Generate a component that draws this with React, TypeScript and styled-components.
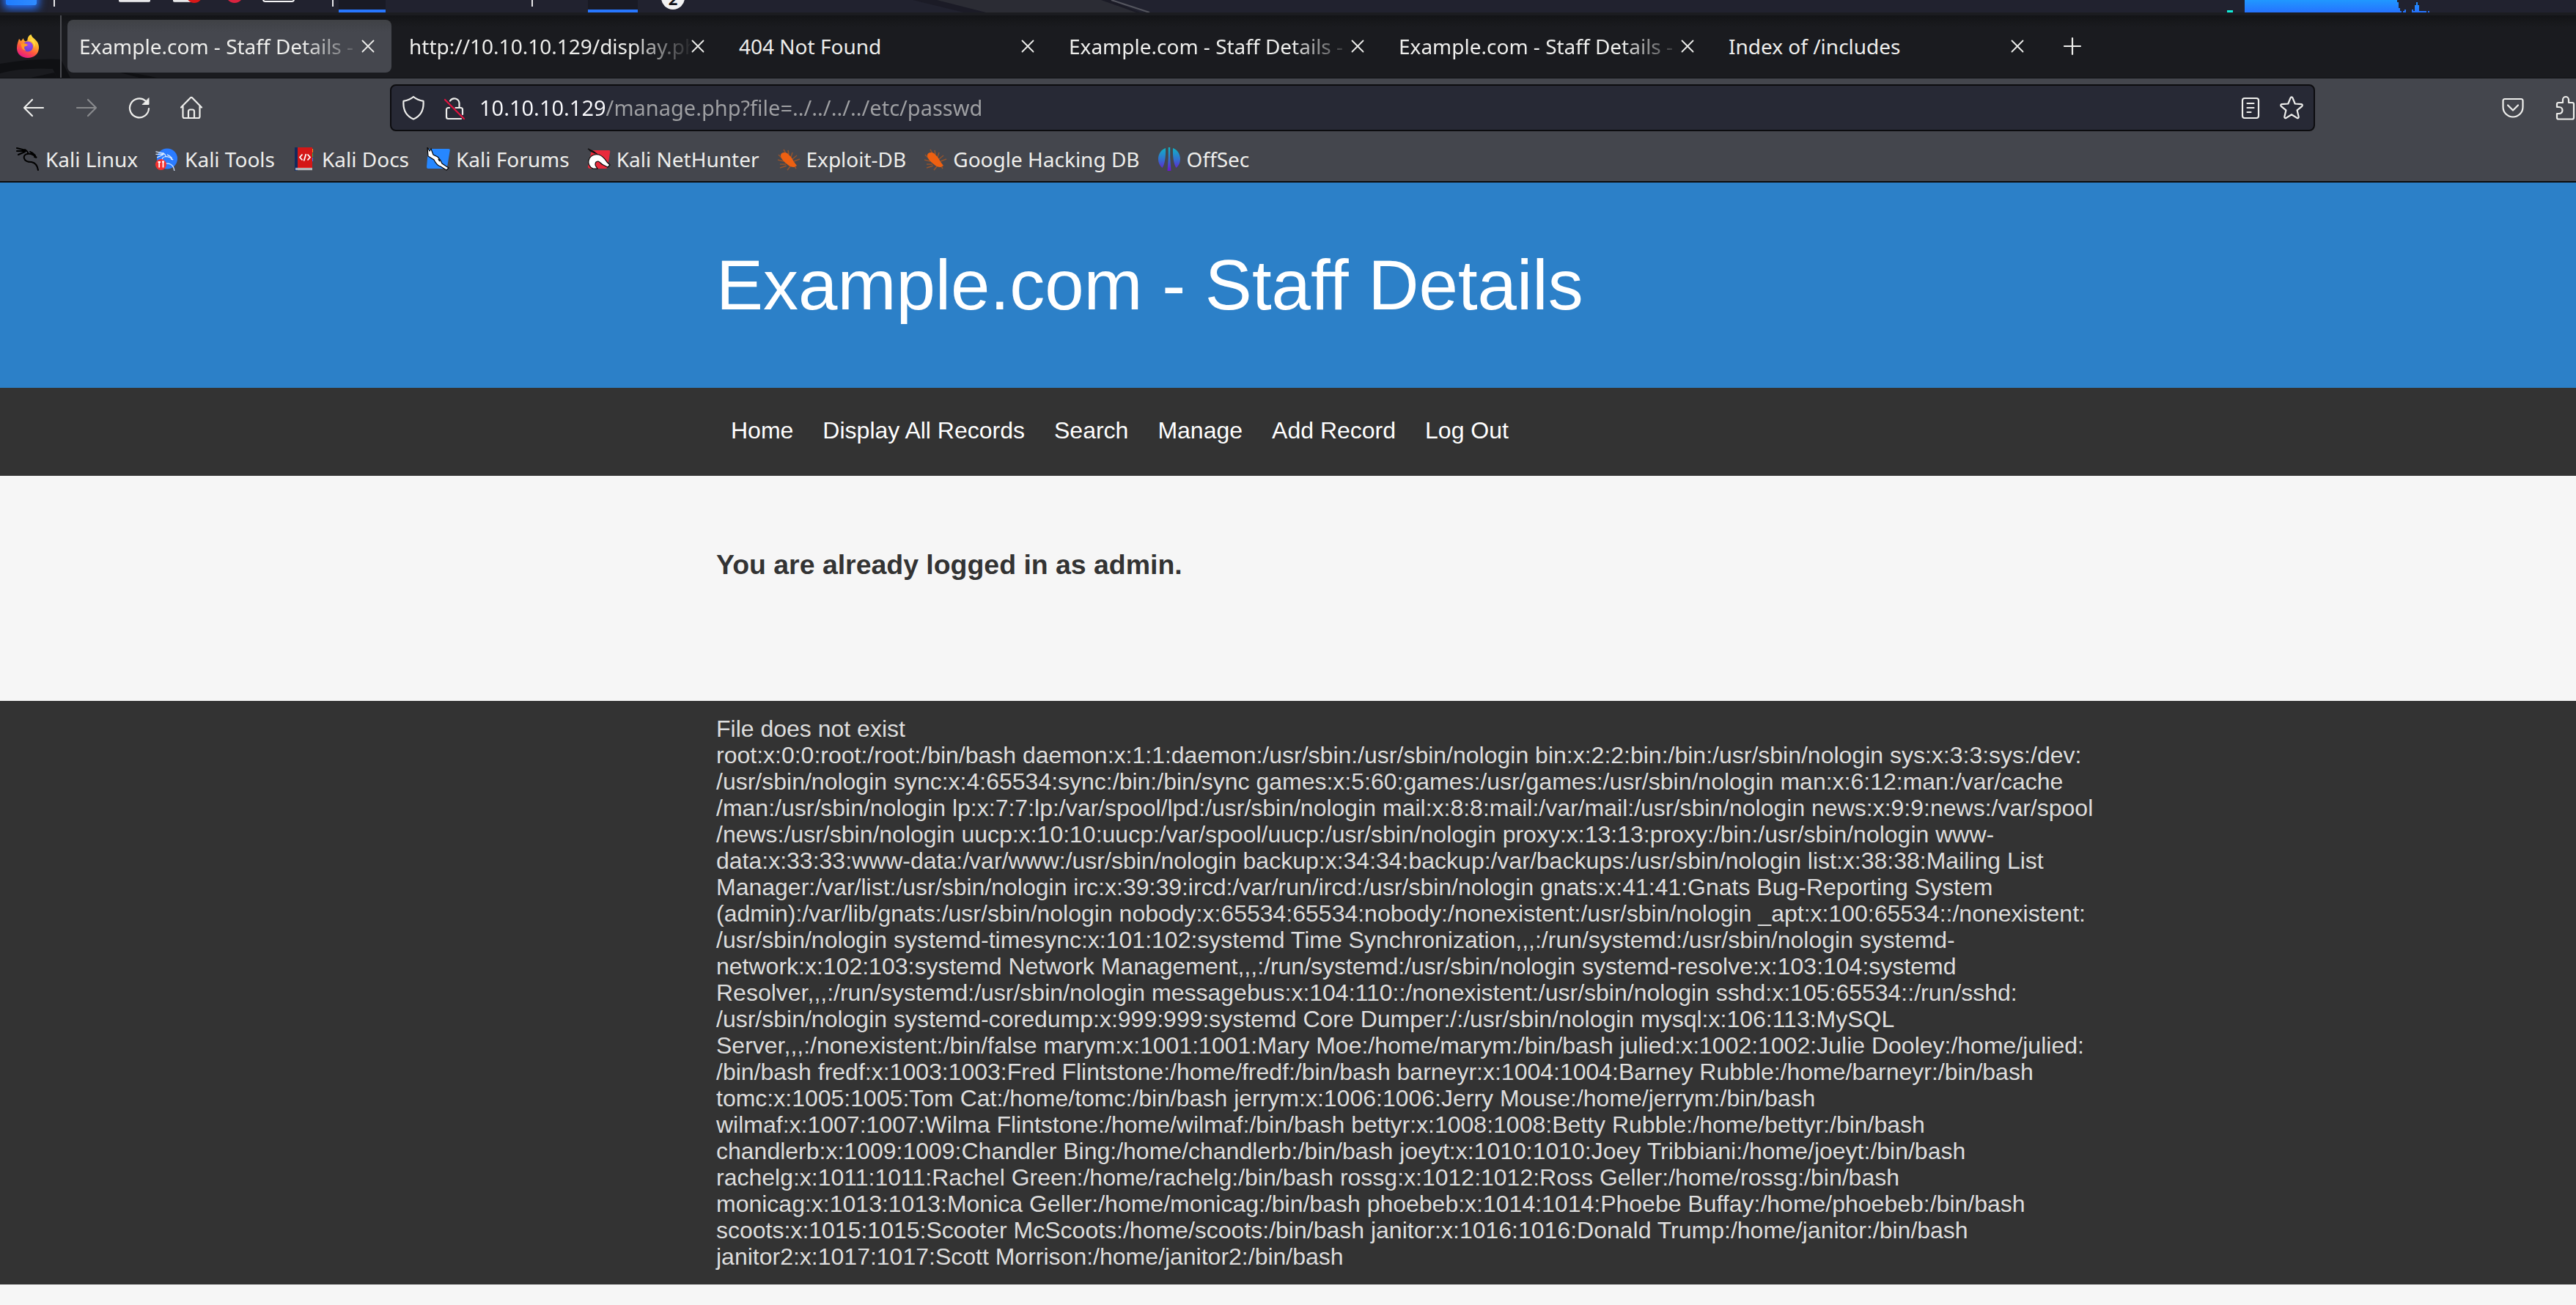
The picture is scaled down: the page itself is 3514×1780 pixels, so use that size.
import React from 'react';
import styled, { createGlobalStyle } from 'styled-components';

const uiFont = '"Noto Sans", "Open Sans", sans-serif';
const pageFont = '"Liberation Sans", Arial, sans-serif';

const GlobalStyle = createGlobalStyle`
  *, *::before, *::after { box-sizing: border-box; }
  html, body { margin: 0; background: #f6f6f6; }
  body { overflow-x: hidden; font-family: ${pageFont}; }
  button { padding: 0; border: 0; background: none; color: inherit; font: inherit; cursor: pointer; }
  svg { display: block; flex: none; }
`;

/* ---------- desktop panel ---------- */

const Panel = styled.div`
  position: relative;
  display: flex;
  align-items: flex-end;
  height: 21px;
  padding-right: 194px;
  overflow: hidden;
  background: #21222f;
  border-bottom: 4px solid #1b1c20;
`;

const PanelBackdrop = styled.svg`
  position: absolute;
  left: 1240px;
  top: 0;
`;

const StartLogo = styled.div`
  flex: none;
  width: 42px;
  height: 42px;
  margin: 0 0 10px 8px;
  border-radius: 2px;
  background: linear-gradient(90deg, #1f7dff, #2f8bff);
  box-shadow: 0 2px 12px 3px #2673ff;
`;

const Divider = styled.div<{ $gap: number }>`
  flex: none;
  width: 2px;
  height: 30px;
  margin: 0 0 8px ${(p) => p.$gap}px;
  background: #e8e8ea;
`;

const Launcher = styled.div<{ $gap: number; $width: number; $rise: number }>`
  position: relative;
  flex: none;
  width: ${(p) => p.$width}px;
  height: 34px;
  margin: 0 0 ${(p) => p.$rise}px ${(p) => p.$gap}px;
`;

const Sheet = styled(Launcher)`
  border-radius: 2px;
  background: #f1f1f2;
  border-bottom: 2px solid #d5d5d8;
`;

const Dot = styled.div`
  position: absolute;
  right: -14px;
  bottom: -3px;
  width: 22px;
  height: 22px;
  border-radius: 50%;
  background: #d81818;
`;

const Orb = styled(Launcher)`
  border-radius: 50%;
  background: #d9233f;
`;

const Terminal = styled(Launcher)`
  border: 2px solid #f4f4f6;
  border-radius: 4px;
  background: #23242f;
`;

const TaskButton = styled.button<{ $gap: number; $width: number }>`
  flex: none;
  width: ${(p) => p.$width}px;
  height: 50px;
  margin-left: ${(p) => p.$gap}px;
  background: #191a24;
  border-bottom: 4px solid #2777ff;
`;

const CountBadge = styled.span`
  flex: none;
  width: 32px;
  height: 32px;
  margin: 0 0 4px 32px;
  border-radius: 50%;
  background: #f2f2f2;
  color: #15151a;
  font: 700 22px/34px ${uiFont};
  text-align: center;
`;

const Graph = styled.svg`
  margin-left: auto;
`;

/* ---------- tab strip ---------- */

const TabStrip = styled.div`
  position: relative;
  display: flex;
  align-items: flex-start;
  height: 86px;
  background: linear-gradient(#131417, #1a1b1f 16px);
  border-bottom: 1px solid #101114;
  color: #eeeeec;
  font-family: ${uiFont};
`;

const StripArt = styled.svg`
  position: absolute;
  left: 0;
  bottom: 0;
`;

const PinnedArea = styled.div`
  position: relative;
  display: flex;
  align-items: center;
  flex: none;
  width: 84px;
  height: 85px;
  padding: 0 0 2px 22px;
  margin-right: 8px;
  border-right: 2px solid #4a4b50;
`;

const Tab = styled.div<{ $active?: boolean }>`
  position: relative;
  display: flex;
  align-items: center;
  flex: none;
  width: 442px;
  height: 72px;
  margin: 6px 8px 0 0;
  padding: 0 22px 0 16px;
  border-radius: 8px;
  background: ${(p) => (p.$active ? 'linear-gradient(#3f4145, #45474e 16px)' : 'transparent')};
`;

const TabTitle = styled.button<{ $fade?: boolean }>`
  flex: 1;
  min-width: 0;
  overflow: hidden;
  white-space: nowrap;
  text-align: left;
  font-size: 28px;
  line-height: 40px;
  mask-image: ${(p) => (p.$fade ? 'linear-gradient(90deg, #000 304px, transparent 388px)' : 'none')};
`;

const CloseButton = styled.button`
  display: grid;
  place-items: center;
  flex: none;
  width: 20px;
  height: 40px;
`;

const NewTabButton = styled.button`
  display: grid;
  place-items: center;
  width: 70px;
  height: 72px;
  margin-top: 6px;
`;

/* ---------- toolbars ---------- */

const Toolbars = styled.div`
  background: #44464d;
  border-bottom: 2px solid #0c0c0e;
  color: #eeeeec;
  font-family: ${uiFont};
`;

const NavBar = styled.div`
  display: flex;
  align-items: center;
  height: 80px;
  padding-left: 10px;
`;

const ToolButton = styled.button<{ $dim?: boolean }>`
  display: grid;
  place-items: center;
  flex: none;
  width: 72px;
  height: 64px;
  opacity: ${(p) => (p.$dim ? 0.4 : 1)};
`;

const UrlBar = styled.label`
  display: flex;
  align-items: center;
  flex: 1;
  height: 64px;
  margin: 0 234px;
  padding: 0 2px;
  border: 2px solid #0c0c0f;
  border-radius: 8px;
  background: #272935;
`;

const UrlButton = styled.button`
  display: grid;
  place-items: center;
  flex: none;
  width: 56px;
  height: 56px;
`;

const UrlInput = styled.input`
  flex: 1;
  min-width: 0;
  margin-left: 6px;
  padding: 0;
  border: 0;
  outline: 0;
  background: linear-gradient(90deg, #fbfbfe 172px, #9fa0a3 172px);
  background-clip: text;
  -webkit-background-clip: text;
  color: transparent;
  font: 29px/40px ${uiFont};
`;

const RightTools = styled.div`
  display: flex;
  flex: none;
  width: 122px;
  overflow: hidden;
`;

const Bookmarks = styled.nav`
  display: flex;
  align-items: center;
  gap: 24px;
  height: 60px;
  padding-left: 22px;
`;

const Bookmark = styled.a`
  display: flex;
  align-items: center;
  gap: 8px;
  color: inherit;
  font-size: 28px;
  line-height: 40px;
  text-decoration: none;
  white-space: nowrap;
`;

/* ---------- web page ---------- */

const Band = styled.section<{ $bg: string; $top: number; $bottom: number }>`
  display: grid;
  grid-template-columns: 977fr 1886fr 651fr;
  padding: ${(p) => p.$top}px 0 ${(p) => p.$bottom}px;
  background: ${(p) => p.$bg};
  font-size: 32px;

  > * { grid-column: 2; }
`;

const SiteTitle = styled.h1`
  margin: 0;
  color: #ffffff;
  font-size: 96px;
  font-weight: 400;
  line-height: 110px;
`;

const Menu = styled.ul`
  display: flex;
  gap: 40px;
  margin: 0;
  padding: 0 20px;
  list-style: none;
`;

const MenuLink = styled.a`
  display: block;
  color: #ffffff;
  line-height: 40px;
  text-decoration: none;
`;

const Notice = styled.h3`
  margin: 0;
  color: #333333;
  line-height: 42px;
`;

const Dump = styled.div`
  color: #dddddd;
  line-height: 36px;
  white-space: pre-line;
`;

/* ---------- icons ---------- */

const line = { fill: 'none', stroke: 'currentColor', strokeWidth: 2.2, strokeLinecap: 'round', strokeLinejoin: 'round' } as const;

const CloseIcon = () => (
  <svg width="20" height="20" viewBox="0 0 20 20" {...line} strokeWidth={1.8}><path d="M2.500 2.500l15 15M17.500 2.500l-15 15" /></svg>
);
const PlusIcon = () => (
  <svg width="26" height="26" viewBox="0 0 26 26" {...line}><path d="M13 2v22M2 13h22" /></svg>
);
const BackIcon = () => (
  <svg width="32" height="32" viewBox="0 0 32 32" {...line}><path d="M29 16H3M14 5L3 16l11 11" /></svg>
);
const ForwardIcon = () => (
  <svg width="32" height="32" viewBox="0 0 32 32" {...line}><path d="M3 16h26M18 5l11 11-11 11" /></svg>
);
const ReloadIcon = () => (
  <svg width="32" height="32" viewBox="0 0 32 32" {...line}>
    <path d="M29 17a13 13 0 1 1-4.500-10.500" />
    <path d="M29 3v8.500h-8.500z" fill="currentColor" strokeWidth="1" />
  </svg>
);
const HomeIcon = () => (
  <svg width="32" height="32" viewBox="1 0 32 32" {...line}>
    <path d="M2 15.500L14.700 2.500a1.800 1.800 0 0 1 2.600 0L30 15.500M4.500 14v14a2 2 0 0 0 2 2h19a2 2 0 0 0 2-2V14" />
    <path d="M12 30v-9a2.500 2.500 0 0 1 2.500-2.500h3a2.500 2.500 0 0 1 2.500 2.500v9" />
  </svg>
);
const ShieldIcon = () => (
  <svg width="32" height="34" viewBox="0 0 32 34" {...line}>
    <path d="M16 2c3.500 3 8 5 13.500 5.800C30.500 20 25 28.500 16 32.500 7 28.500 1.500 20 2.500 7.800 8 7 12.500 5 16 2z" />
  </svg>
);
const LockIcon = () => (
  <svg width="32" height="34" viewBox="0 0 32 34" {...line}>
    <path d="M10 7.500A6.800 6.800 0 0 1 22.500 10.500V17M17.500 17h7a2.500 2.500 0 0 1 2.500 2.500V26M9 17H7.500A2.500 2.500 0 0 0 5 19.500v10A2.500 2.500 0 0 0 7.500 32H25" />
    <path d="M3 6l26 26" stroke="#e4133f" />
  </svg>
);
const ReaderIcon = () => (
  <svg width="28" height="32" viewBox="0 0 28 32" {...line}>
    <rect x="3" y="3" width="22" height="27" rx="3" />
    <path d="M9.500 10h9M9.500 16h9M9.500 22h5" />
  </svg>
);
const StarIcon = () => (
  <svg width="34" height="34" viewBox="0 0 34 34" {...line}>
    <path d="M15.600 3.300a1.500 1.500 0 0 1 2.800 0l3.300 8.200 8.700.7a1.500 1.500 0 0 1 .9 2.600l-6.700 5.600 2.100 8.900a1.500 1.500 0 0 1-2.300 1.600L17 26.300l-7.400 4.600a1.500 1.500 0 0 1-2.300-1.600l2.100-8.900-6.700-5.600a1.500 1.500 0 0 1 .9-2.600l8.700-.7z" />
  </svg>
);
const PocketIcon = () => (
  <svg width="32" height="32" viewBox="0 0 32 32" {...line}>
    <path d="M5 4h22a2.500 2.500 0 0 1 2.500 2.500V15a13.500 13.500 0 0 1-27 0V6.500A2.500 2.500 0 0 1 5 4z" />
    <path d="M9 12.500l7 7 7-7" />
  </svg>
);
const PuzzleIcon = () => (
  <svg width="34" height="34" viewBox="0 0 34 34" {...line}>
    <path d="M7 32.500h19a2 2 0 0 0 2-2V12a2 2 0 0 0-2-2h-5V6a4 4 0 0 0-8 0v4H7a2 2 0 0 0-2 2v4h3a4.500 4.500 0 0 1 0 9H5v5.500a2 2 0 0 0 2 2z" />
  </svg>
);

const FirefoxIcon = () => (
  <svg width="32" height="34" viewBox="0 0 32 34">
    <defs>
      <linearGradient id="ffBody" x1="0.8" y1="0" x2="0.3" y2="1">
        <stop offset="0" stopColor="#fff04a" />
        <stop offset="0.35" stopColor="#ffb32a" />
        <stop offset="0.65" stopColor="#ff5a3c" />
        <stop offset="1" stopColor="#e31587" />
      </linearGradient>
      <radialGradient id="ffGlobe" cx="0.6" cy="0.3" r="0.8">
        <stop offset="0" stopColor="#a347f0" />
        <stop offset="1" stopColor="#5b3fd0" />
      </radialGradient>
    </defs>
    <path d="M1 20C1 14 3 10 4 7c1 1 2 2 2.500 3C8 9 9 7 10 6c0 2 1 4 3 4.500L15.500 9c0-4 2-7 5-8 .5 3 3 4.500 5 6.500 3.500 3 6 7 5.500 12.500C30.500 28 24 33 16 33S1 28 1 20z" fill="url(#ffBody)" />
    <circle cx="16" cy="17.500" r="7" fill="url(#ffGlobe)" />
    <path d="M7 14c3-2 6-1 9 1-1 2-3 2-4.500 2.500-1 2 0 4 2 5.500-4 0-7-4-6.500-9z" fill="#ff9a24" />
    <path d="M17 9.500c5 0 8.500 5 7 10 3-4 2-9-2-12.500z" fill="#ffe14a" opacity="0.8" />
  </svg>
);

const dragonPath = 'M1 1l12 3M1 5l12 0M3 10l9-4M12 3c3 2 5 4 4 6-4 0-6 3-5 6 1 4 6 5 10 5 5 1 8 4 9 11M15 9c5-1 9 1 13 5l-3-1M19 6c3 1 5 3 7 5';
const KaliIcon = () => (
  <svg width="32" height="32" viewBox="0 0 32 32" fill="none" stroke="#000" strokeWidth="2" strokeLinecap="round"><path d={dragonPath} /></svg>
);
const ToolsIcon = () => (
  <svg width="32" height="32" viewBox="1 0 32 32">
    <circle cx="17" cy="15.500" r="14" fill="#2a7bff" />
    <path d={dragonPath} transform="translate(1 5) scale(.86)" fill="none" stroke="#d8e9ff" strokeWidth="1.400" strokeLinecap="round" />
    <circle cx="8.500" cy="23.500" r="7.500" fill="#f4312f" />
    <path d="M4.500 20h3.500M6.200 20v7.500M10 19.500h3M11.500 20v7.500" stroke="#fff" strokeWidth="1.800" fill="none" />
  </svg>
);
const DocsIcon = () => (
  <svg width="32" height="32" viewBox="0 0 32 32">
    <path d="M27 2h1v5h-1z" fill="#ff8c1a" /><path d="M27 8h1v5h-1z" fill="#2bb24c" /><path d="M27 14h1v5h-1z" fill="#2a7bff" />
    <path d="M3 0h4v32H3z" fill="#122a5c" />
    <path d="M7 0h20v28H7z" fill="#d41717" />
    <path d="M4 28h23v1H4zM4 30h23v1H4z" fill="#fff" />
    <path d="M13.500 9.500L10 13.500l3.500 4M20.500 9.500l3.500 4-3.500 4M18.500 9l-3 9.500" stroke="#fff" strokeWidth="1.800" fill="none" />
  </svg>
);
const ForumsIcon = () => (
  <svg width="32" height="32" viewBox="0 0 32 32">
    <path d="M2 3q0-1 1-1h27q2 0 1.800 2L28 27q-.5 2-2 2H2q-2 0-2-2z" fill="#2687ff" />
    <path d="M1 0l3 5 2-3 3 8 6 3c3 3 5 6 6 9l9 6-3 3-8-5c-4-1-7-5-9-9L2 12z" fill="#fff" stroke="#050505" strokeWidth="1.200" />
    <path d="M16 16l2 3" stroke="#050505" strokeWidth="1.500" />
  </svg>
);
const NetHunterIcon = () => (
  <svg width="32" height="32" viewBox="0 0 32 32">
    <path d="M6 4h24q1.500 0 1.300 2L28 26q-.5 3-3 3H4q-3 0-3-3z" fill="#e92a3c" />
    <path d="M1 2l8 4 8 6M3 4l8 4" stroke="#111" strokeWidth="1.500" fill="none" />
    <path d="M8 29C3 27 1 22 2 18 4 11 10 9 16 10c6 2 8 6 11 10l4 4-3 3-6-3c-3-1-4-4-7-5-4 0-5 4-3 7l2 3z" fill="#fff" stroke="#050505" strokeWidth="1.200" />
  </svg>
);
const SpiderIcon = () => (
  <svg width="32" height="32" viewBox="0 0 32 32">
    <path d="M9 3l4 7M15 4l1 6M2 10l5 5M1 17l8 2M4 28l9-3M4 23l8 0M14 31l4-5M31 16l-8 3M21 7l-2 6M27 11l-6 5M26 29l-3-5" stroke="#b3591f" strokeWidth="1.600" fill="none" opacity="0.7" />
    <path d="M5 11c0-4 5-5 9-3l5 5c2 3 3 5 5 8l3 4-4 2c-3 0-6-1-8-3C11 21 5 16 5 11z" fill="#ee6011" />
  </svg>
);
const OffSecIcon = () => (
  <svg width="32" height="32" viewBox="0 0 32 32">
    <defs>
      <linearGradient id="offsec" gradientUnits="userSpaceOnUse" x1="0" y1="0" x2="0" y2="32">
        <stop offset="0" stopColor="#0eb6c6" /><stop offset="0.5" stopColor="#3172cf" /><stop offset="1" stopColor="#6a14cf" />
      </linearGradient>
    </defs>
    <path d="M11 1C5 3 1 9 1 16c0 5 2 9 5.500 12C10 23 11.500 12 11 1zM21 1c6 2 10 8 10 15 0 5-2 9-5.500 12C22 23 20.500 12 21 1zM14.800 0h2.400v14l1.300 18h-5l1.300-18z" fill="url(#offsec)" />
  </svg>
);

/* ---------- content ---------- */

const tabs = [
  { title: 'Example.com - Staff Details -', fade: true, active: true },
  { title: 'http://10.10.10.129/display.ph', fade: true },
  { title: '404 Not Found' },
  { title: 'Example.com - Staff Details -', fade: true },
  { title: 'Example.com - Staff Details -', fade: true },
  { title: 'Index of /includes' },
];

const bookmarks = [
  { label: 'Kali Linux', Icon: KaliIcon },
  { label: 'Kali Tools', Icon: ToolsIcon },
  { label: 'Kali Docs', Icon: DocsIcon },
  { label: 'Kali Forums', Icon: ForumsIcon },
  { label: 'Kali NetHunter', Icon: NetHunterIcon },
  { label: 'Exploit-DB', Icon: SpiderIcon },
  { label: 'Google Hacking DB', Icon: SpiderIcon },
  { label: 'OffSec', Icon: OffSecIcon },
];

const menu = ['Home', 'Display All Records', 'Search', 'Manage', 'Add Record', 'Log Out'];

const dump = `File does not exist
root:x:0:0:root:/root:/bin/bash daemon:x:1:1:daemon:/usr/sbin:/usr/sbin/nologin bin:x:2:2:bin:/bin:/usr/sbin/nologin sys:x:3:3:sys:/dev:
/usr/sbin/nologin sync:x:4:65534:sync:/bin:/bin/sync games:x:5:60:games:/usr/games:/usr/sbin/nologin man:x:6:12:man:/var/cache
/man:/usr/sbin/nologin lp:x:7:7:lp:/var/spool/lpd:/usr/sbin/nologin mail:x:8:8:mail:/var/mail:/usr/sbin/nologin news:x:9:9:news:/var/spool
/news:/usr/sbin/nologin uucp:x:10:10:uucp:/var/spool/uucp:/usr/sbin/nologin proxy:x:13:13:proxy:/bin:/usr/sbin/nologin www-
data:x:33:33:www-data:/var/www:/usr/sbin/nologin backup:x:34:34:backup:/var/backups:/usr/sbin/nologin list:x:38:38:Mailing List
Manager:/var/list:/usr/sbin/nologin irc:x:39:39:ircd:/var/run/ircd:/usr/sbin/nologin gnats:x:41:41:Gnats Bug-Reporting System
(admin):/var/lib/gnats:/usr/sbin/nologin nobody:x:65534:65534:nobody:/nonexistent:/usr/sbin/nologin _apt:x:100:65534::/nonexistent:
/usr/sbin/nologin systemd-timesync:x:101:102:systemd Time Synchronization,,,:/run/systemd:/usr/sbin/nologin systemd-
network:x:102:103:systemd Network Management,,,:/run/systemd:/usr/sbin/nologin systemd-resolve:x:103:104:systemd
Resolver,,,:/run/systemd:/usr/sbin/nologin messagebus:x:104:110::/nonexistent:/usr/sbin/nologin sshd:x:105:65534::/run/sshd:
/usr/sbin/nologin systemd-coredump:x:999:999:systemd Core Dumper:/:/usr/sbin/nologin mysql:x:106:113:MySQL
Server,,,:/nonexistent:/bin/false marym:x:1001:1001:Mary Moe:/home/marym:/bin/bash julied:x:1002:1002:Julie Dooley:/home/julied:
/bin/bash fredf:x:1003:1003:Fred Flintstone:/home/fredf:/bin/bash barneyr:x:1004:1004:Barney Rubble:/home/barneyr:/bin/bash
tomc:x:1005:1005:Tom Cat:/home/tomc:/bin/bash jerrym:x:1006:1006:Jerry Mouse:/home/jerrym:/bin/bash
wilmaf:x:1007:1007:Wilma Flintstone:/home/wilmaf:/bin/bash bettyr:x:1008:1008:Betty Rubble:/home/bettyr:/bin/bash
chandlerb:x:1009:1009:Chandler Bing:/home/chandlerb:/bin/bash joeyt:x:1010:1010:Joey Tribbiani:/home/joeyt:/bin/bash
rachelg:x:1011:1011:Rachel Green:/home/rachelg:/bin/bash rossg:x:1012:1012:Ross Geller:/home/rossg:/bin/bash
monicag:x:1013:1013:Monica Geller:/home/monicag:/bin/bash phoebeb:x:1014:1014:Phoebe Buffay:/home/phoebeb:/bin/bash
scoots:x:1015:1015:Scooter McScoots:/home/scoots:/bin/bash janitor:x:1016:1016:Donald Trump:/home/janitor:/bin/bash
janitor2:x:1017:1017:Scott Morrison:/home/janitor2:/bin/bash`;

export default function App() {
  return (
    <>
      <GlobalStyle />
      <Panel>
        <PanelBackdrop width="340" height="17" viewBox="0 0 340 17">
          <path d="M5 0h270l40 17H75z" fill="#1b1b26" />
          <path d="M38 0h224l48 17H105z" fill="#2b2c34" />
          <path d="M276 0l52 17" stroke="#55565f" strokeWidth="2" />
        </PanelBackdrop>
        <StartLogo />
        <Divider $gap={23} />
        <Sheet $gap={87} $width={43} $rise={14} />
        <Sheet $gap={31} $width={26} $rise={14}><Dot /></Sheet>
        <Orb $gap={44} $width={28} $rise={13} />
        <Terminal $gap={24} $width={44} $rise={14} />
        <Divider $gap={51} />
        <TaskButton $gap={7} $width={64} aria-label="Files window" />
        <Divider $gap={199} />
        <TaskButton $gap={75} $width={68} aria-label="Browser window" />
        <CountBadge>2</CountBadge>
        <Graph width="282" height="17" viewBox="0 0 282 17">
          <defs>
            <linearGradient id="cpu" x1="0" y1="0" x2="0" y2="1">
              <stop offset="0" stopColor="#2098ff" /><stop offset="1" stopColor="#2672ff" />
            </linearGradient>
          </defs>
          <path d="M0 14h8v3H0z" fill="#12ecd8" />
          <path d="M24 0h208v3h2v8h2v4h2v2H24zM240 15h2v-2h2v4h-4zM252 13h2v2h2V7h2V3h2v4h2v8h10v2h-20zM274 15h2v2h-2z" fill="url(#cpu)" />
        </Graph>
      </Panel>

      <TabStrip>
        <StripArt width="220" height="26" viewBox="0 0 220 26">
          <path d="M0 7Q50-1 83 1l13 25h-18l-6-12Q30 12 0 20z" fill="#0f1013" />
          <path d="M42 26l32-7 4 7zM160 18q30 2 54 8h-24z" fill="#0f1013" />
        </StripArt>
        <PinnedArea><FirefoxIcon /></PinnedArea>
        {tabs.map((tab, i) => (
          <Tab key={i} $active={tab.active}>
            <TabTitle $fade={tab.fade}>{tab.title}</TabTitle>
            <CloseButton aria-label="Close tab"><CloseIcon /></CloseButton>
          </Tab>
        ))}
        <NewTabButton aria-label="New tab"><PlusIcon /></NewTabButton>
      </TabStrip>

      <Toolbars>
        <NavBar>
          <ToolButton aria-label="Back"><BackIcon /></ToolButton>
          <ToolButton aria-label="Forward" $dim><ForwardIcon /></ToolButton>
          <ToolButton aria-label="Reload"><ReloadIcon /></ToolButton>
          <ToolButton aria-label="Home"><HomeIcon /></ToolButton>
          <UrlBar>
            <UrlButton aria-label="Tracking protection"><ShieldIcon /></UrlButton>
            <UrlButton aria-label="Connection not secure"><LockIcon /></UrlButton>
            <UrlInput aria-label="Address" defaultValue="10.10.10.129/manage.php?file=../../../../etc/passwd" />
            <UrlButton aria-label="Reader view"><ReaderIcon /></UrlButton>
            <UrlButton aria-label="Bookmark this page"><StarIcon /></UrlButton>
          </UrlBar>
          <RightTools>
            <ToolButton aria-label="Save to Pocket"><PocketIcon /></ToolButton>
            <ToolButton aria-label="Extensions"><PuzzleIcon /></ToolButton>
          </RightTools>
        </NavBar>
        <Bookmarks>
          {bookmarks.map(({ label, Icon }) => (
            <Bookmark key={label} href="#"><Icon />{label}</Bookmark>
          ))}
        </Bookmarks>
      </Toolbars>

      <Band as="header" $bg="#2c80c8" $top={85} $bottom={85}>
        <SiteTitle>Example.com - Staff Details</SiteTitle>
      </Band>
      <Band as="nav" $bg="#333333" $top={38} $bottom={42}>
        <Menu>
          {menu.map((item) => (
            <li key={item}><MenuLink href="#">{item}</MenuLink></li>
          ))}
        </Menu>
      </Band>
      <Band $bg="#f6f6f6" $top={100} $bottom={165}>
        <Notice>You are already logged in as admin.</Notice>
      </Band>
      <Band as="footer" $bg="#333333" $top={20} $bottom={20}>
        <Dump>{dump}</Dump>
      </Band>
    </>
  );
}
